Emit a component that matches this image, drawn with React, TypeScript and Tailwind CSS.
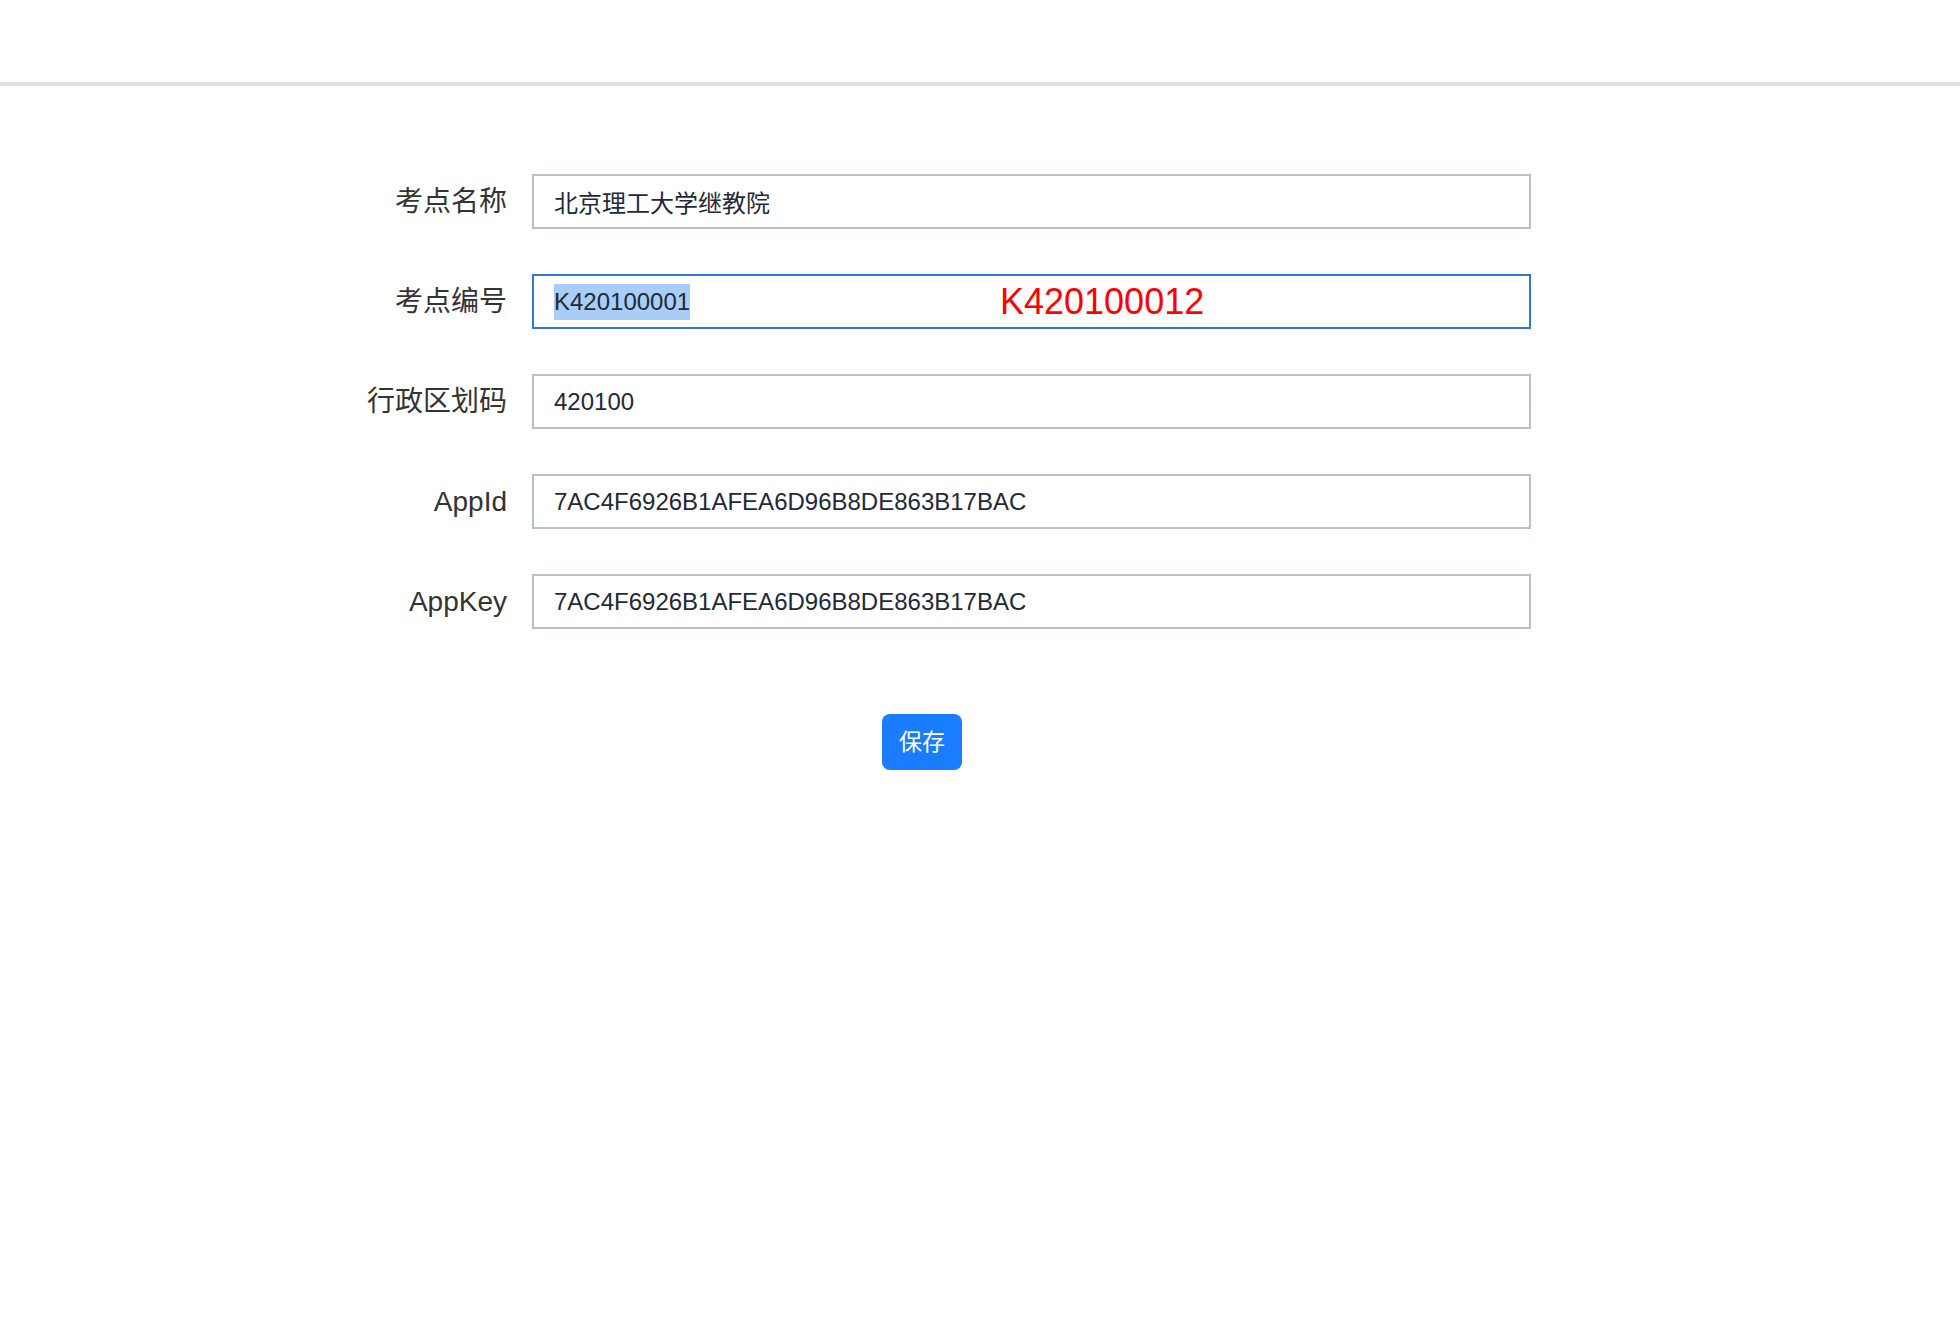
const fields = [
  { label: "考点名称", value: "北京理工大学继教院" },
  { label: "考点编号", value: "K420100001", focused: true },
  { label: "行政区划码", value: "420100" },
  { label: "AppId", value: "7AC4F6926B1AFEA6D96B8DE863B17BAC" },
  { label: "AppKey", value: "7AC4F6926B1AFEA6D96B8DE863B17BAC" },
];

const App = () => {
  return (
    <div className="min-h-screen bg-white font-['Liberation_Sans','Noto_Sans_CJK_SC',sans-serif]">
      <div className="h-[86px] border-b-4 border-[#dbe1e9] bg-white" />

      <div className="ml-[347px] flex flex-col pt-[88px]">
        <div className="flex flex-col gap-[45px]">
          {fields.map((field) => (
            <div key={field.label} className="flex items-center gap-[25px]">
              <label className="w-[160px] text-right text-[28px] leading-none text-[#333]">
                {field.label}
              </label>
              {field.focused ? (
                <div className="relative flex h-[55px] w-[999px] items-center border-2 border-[#2f78d8] px-[20px] text-[24px] text-[#1f2937]">
                  <span className="bg-[#a9cdf9]">{field.value}</span>
                  <span className="absolute left-[466px] top-1/2 -translate-y-1/2 text-[36px] leading-none text-[#ff0000]">
                    K420100012
                  </span>
                </div>
              ) : (
                <input
                  readOnly
                  defaultValue={field.value}
                  className="h-[55px] w-[999px] border-2 border-[#b6c0d0] px-[20px] text-[24px] text-[#1f2937] outline-none"
                />
              )}
            </div>
          ))}
        </div>

        <div className="ml-[535px] mt-[85px]">
          <button className="h-[56px] w-[80px] rounded-[8px] bg-[#1a7cff] text-[23px] text-white">
            保存
          </button>
        </div>
      </div>
    </div>
  );
};

export default App;
